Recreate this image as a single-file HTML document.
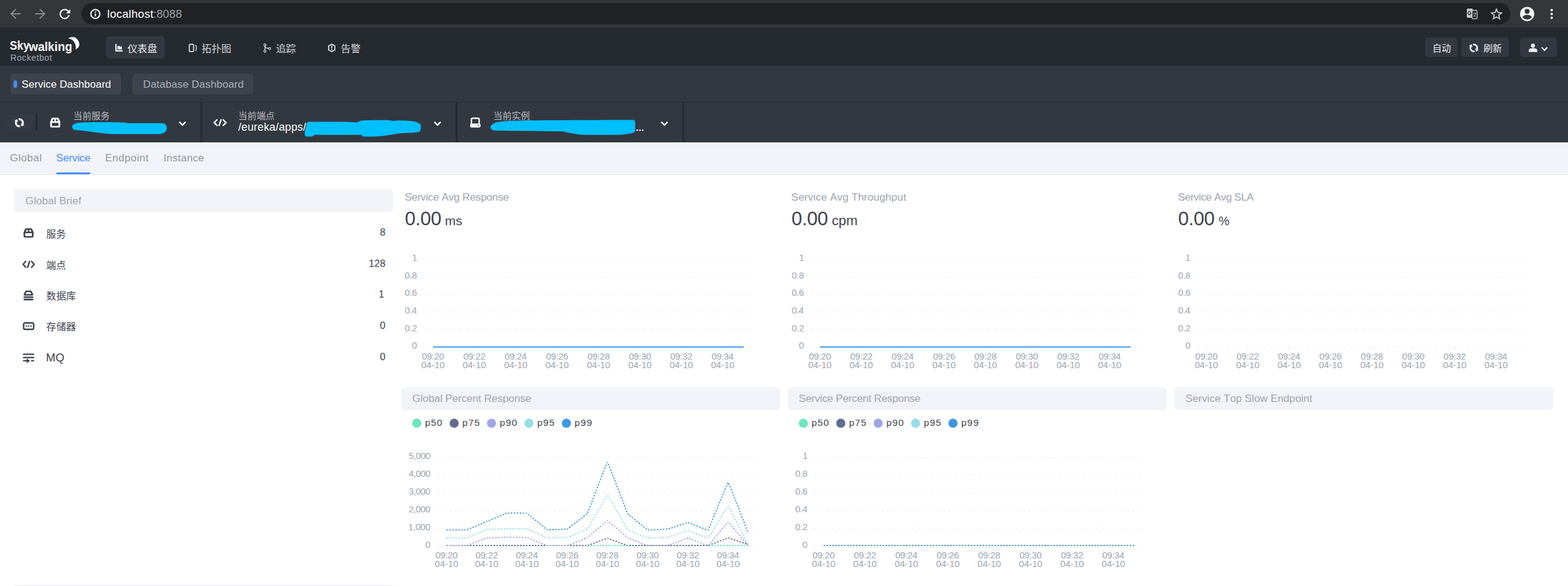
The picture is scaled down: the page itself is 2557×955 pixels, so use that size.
<!DOCTYPE html>
<html lang="zh"><head><meta charset="utf-8"><title>SkyWalking</title>
<style>
html,body{margin:0;padding:0;background:#fff}
body{width:2557px;height:955px;overflow:hidden;position:relative;font-family:"Liberation Sans",sans-serif;font-kerning:none}
#page{position:absolute;left:0;top:0;width:2557px;height:955px;overflow:hidden}
#page>div{position:absolute}
#page>svg{position:absolute;left:0;top:0}
.t{position:absolute;white-space:pre;font-kerning:none;font-variant-ligatures:none}
svg text{font-family:"Liberation Sans","Noto Sans CJK SC",sans-serif}
</style></head><body><div id="page">
<div style="left:0px;top:0px;width:2557px;height:45px;background:#35363a;"></div>
<div style="left:133px;top:5px;width:2329.8px;height:35px;background:#202124;border-radius:17.5px;"></div>
<div style="left:0px;top:45px;width:2557px;height:61.6px;background:#252a2f;"></div>
<div style="left:173px;top:59px;width:96px;height:36px;background:#333840;border-radius:5px;"></div>
<div style="left:2324px;top:61px;width:53px;height:32px;background:#333840;border-radius:5px;"></div>
<div style="left:2383px;top:61px;width:78px;height:32px;background:#333840;border-radius:5px;"></div>
<div style="left:2479px;top:61px;width:60px;height:32px;background:#333840;border-radius:5px;"></div>
<div style="left:0px;top:106.6px;width:2557px;height:59.4px;background:#333840;"></div>
<div style="left:17px;top:120px;width:180px;height:33.5px;background:#3e434c;border-radius:5px;"></div>
<div style="left:22px;top:131px;width:6px;height:12px;background:#448dfe;border-radius:3px;"></div>
<div style="left:216px;top:120px;width:197px;height:33.5px;background:#3e434c;border-radius:5px;"></div>
<div style="left:0px;top:166px;width:2557px;height:66px;background:#333840;"></div>
<div style="left:0px;top:165.6px;width:2557px;height:1.4px;background:#252a2f;"></div>
<div style="left:327.2px;top:167px;width:2.7px;height:65px;background:#252a2f;"></div>
<div style="left:743.4px;top:167px;width:2.7px;height:65px;background:#252a2f;"></div>
<div style="left:1113.3px;top:167px;width:2.7px;height:65px;background:#252a2f;"></div>
<div style="left:58.2px;top:185px;width:2.6px;height:28px;background:#252a2f;"></div>
<div style="left:11.8px;top:187px;width:41px;height:25.4px;background:#353a45;border-radius:4px"></div>
<div style="left:0px;top:232px;width:2557px;height:53px;background:#f3f4f9;"></div>
<div style="left:0px;top:284.2px;width:2557px;height:1px;background:#e6e8ef;"></div>
<div style="left:92px;top:281px;width:55px;height:3.4px;background:#448dfe;"></div>
<div style="left:23px;top:309px;width:618px;height:36px;background:#f3f4f9;border-radius:5px;"></div>
<div style="left:24px;top:953px;width:616px;height:2px;background:#f3f4f9;border-radius:4px 4px 0 0;"></div>
<div style="left:654px;top:631px;width:618px;height:36.6px;background:#f3f4f9;border-radius:5px;"></div>
<div style="left:1284.5px;top:631px;width:618px;height:36.6px;background:#f3f4f9;border-radius:5px;"></div>
<div style="left:1915px;top:631px;width:618px;height:36.6px;background:#f3f4f9;border-radius:5px;"></div>
<svg width="2557" height="955" viewBox="0 0 2557 955">
<g fill="none" stroke="#8b8c90" stroke-width="2"><path d="M33.6 22.6H18.4M26 14.9L18.2 22.6L26 30.3"/><path d="M57.2 22.6H72.4M64.8 14.9L72.6 22.6L64.8 30.3"/></g>
<g><path fill="none" stroke="#f1f3f4" stroke-width="2.1" d="M112.1 19.6A7.3 7.3 0 1 0 112.6 24.6"/><path fill="#f1f3f4" d="M114.6 14.9V21.7H107.8Z"/></g>
<g><circle cx="155.5" cy="22.8" r="7.3" fill="none" stroke="#fff" stroke-width="2"/><rect x="154.5" y="21.9" width="2" height="4.8" fill="#fff"/><rect x="154.5" y="18.6" width="2" height="2" fill="#fff"/></g>
<g><rect x="2392" y="14" width="9.6" height="15" rx="1.2" fill="#c4c7cc"/><rect x="2400.6" y="17" width="8.2" height="13.6" rx="1" fill="#202124" stroke="#c4c7cc" stroke-width="1.3"/><path d="M2398.9 21.4A2.6 2.6 0 1 1 2398.2 19.4M2396.6 21.4H2399" fill="none" stroke="#202124" stroke-width="1.2"/><path d="M2402.6 21.6H2407.4M2405 20.4V21.6M2406.6 21.8C2406 24.4 2404.6 26.2 2402.6 27.6M2403.4 23.6C2404.2 25.4 2405.6 26.8 2407.4 27.8" fill="none" stroke="#c4c7cc" stroke-width="1"/></g>
<path d="M2440.4 15L2442.69 20.44L2448.58 20.94L2444.11 24.81L2445.45 30.56L2440.4 27.5L2435.35 30.56L2436.69 24.81L2432.22 20.94L2438.11 20.44Z" fill="none" stroke="#c4c7cc" stroke-width="1.9" stroke-linejoin="miter"/>
<g><circle cx="2490.4" cy="22.8" r="11.6" fill="#f1f3f4"/><circle cx="2490.4" cy="18.4" r="4" fill="#35363a"/><path d="M2483 28.4C2483 25.4 2487.4 24.2 2490.4 24.2S2497.8 25.4 2497.8 28.4C2496 30.4 2493.4 31.7 2490.4 31.7S2484.8 30.4 2483 28.4Z" fill="#35363a"/></g>
<circle cx="2530.4" cy="16.6" r="2" fill="#f1f3f4"/>
<circle cx="2530.4" cy="22.8" r="2" fill="#f1f3f4"/>
<circle cx="2530.4" cy="29.1" r="2" fill="#f1f3f4"/>
<path fill="#fff" d="M111.2 62.8C114 60.6 117 60 119.3 60.3C123 60.8 125.4 62.8 126.9 65.3C128.6 67.8 129.6 70.4 129.4 72.9C129.2 75.4 127.6 77.6 125.6 79.1C124.6 79.8 123.6 80.2 122.5 80.4C123.6 79.2 123.9 77.8 123.7 76.6C123.4 74.8 123.2 73.2 122.5 71.6C121.6 69.2 120 67 118.1 65.3C116.2 63.8 113.8 63 111.2 62.8Z"/>
<g fill="#efeff1"><path d="M188 71.7H190.2V81.8H200V84H188Z"/><path d="M191.4 80.6V74.4L193 75.6L194.4 74.6L196.4 76.2L198.8 75.2V80.6Z"/></g>
<text x="208" y="84.8" font-size="16.1" fill="#efeff1">仪表盘</text>
<g fill="none" stroke="#d2d4d8" stroke-width="1.9"><rect x="308.7" y="72.3" width="7" height="11.8" rx="1.9"/><path d="M318.6 73.4C321 75.4 321 81 318.6 83" stroke-width="1.6"/></g>
<text x="328.8" y="84.8" font-size="16.1" fill="#d2d4d8">拓扑图</text>
<g fill="none" stroke="#d2d4d8" stroke-width="1.3"><circle cx="432" cy="73.1" r="1.7"/><circle cx="432" cy="83.3" r="1.7"/><circle cx="439.6" cy="79" r="1.7"/><path d="M432 74.8V81.6M432 75.4C432.6 78 434.6 78.8 437.9 79" stroke-width="1.5"/></g>
<text x="450" y="84.9" font-size="16.3" fill="#d2d4d8">追踪</text>
<g><path d="M541 72L546 74.9V81.4L541 84.3L536 81.4V74.9Z" fill="none" stroke="#d2d4d8" stroke-width="1.9" stroke-linejoin="round"/><rect x="540.1" y="74.8" width="1.9" height="4.4" fill="#d2d4d8"/><rect x="540.1" y="80" width="1.9" height="1.7" fill="#d2d4d8"/></g>
<text x="555.8" y="84.9" font-size="16.1" fill="#d2d4d8">告警</text>
<text x="2336" y="84.3" font-size="15" fill="#efeff1">自动</text>
<g><path d="M2401.95 72.69A5.6 5.6 0 0 1 2408.59 80.2" fill="none" stroke="#efeff1" stroke-width="2.5"/><path d="M2411.49 81.37L2405.69 79.03L2407 84.14Z" fill="#efeff1"/><path d="M2404.85 83.51A5.6 5.6 0 0 1 2398.21 76" fill="none" stroke="#efeff1" stroke-width="2.5"/><path d="M2395.31 74.83L2401.11 77.17L2399.8 72.06Z" fill="#efeff1"/></g>
<text x="2419" y="84.3" font-size="15.1" fill="#efeff1">刷新</text>
<g fill="#efeff1"><circle cx="2499.9" cy="74.4" r="3.3"/><path d="M2492.9 84.8V82.4C2492.9 80 2495.4 78.6 2499.9 78.6S2506.9 80 2506.9 82.4V84.8Z"/></g>
<path d="M2514.7 77.8L2518.7 82.1L2522.7 77.8" fill="none" stroke="#efeff1" stroke-width="2.2" stroke-linecap="round" stroke-linejoin="round"/>
<g><path d="M30.41 194.52A5.7 5.7 0 0 1 36.81 202.42" fill="none" stroke="#ffffff" stroke-width="3"/><path d="M39.82 203.76L33.79 201.08L35.18 206.07Z" fill="#ffffff"/><path d="M32.79 205.68A5.7 5.7 0 0 1 26.39 197.78" fill="none" stroke="#ffffff" stroke-width="3"/><path d="M23.38 196.44L29.41 199.12L28.02 194.13Z" fill="#ffffff"/></g>
<path d="M81.8 198.46L83.93 193.31Q84.59 191.7 86.39 191.7L93.61 191.7Q95.41 191.7 96.07 193.31L98.2 198.46Q98.2 199.11 98.2 199.75L98.2 205.55Q98.2 207.8 95.9 207.8L84.1 207.8Q81.8 207.8 81.8 205.55L81.8 199.75Q81.8 199.11 81.8 198.46Z" fill="#ffffff"/>
<path d="M86.72 194.44L88.85 194.44L88.85 197.5L85.41 197.5ZM91.15 194.44L93.28 194.44L94.59 197.5L91.15 197.5ZM84.59 200.23H95.41V205.22H84.59Z" fill="#333840"/>
<text x="119.6" y="194" font-size="14.8" fill="#b9bcc3">当前服务</text>
<path fill="#00bfff" d="M117.6 205.1C120 202 124 200.4 128.4 200C150 198.6 180 199 199 199.5C204 199.8 208 200.8 211.9 200.8H263.5C267 201 269.4 202 270.4 203.4C271.8 205 272.4 207 272.1 209.4C272 212 270.8 214 268.7 215.4C266 217.4 263 218.4 259.2 218.5H186C177 218.2 168 217.4 160.2 216.3C151 215 143 213.8 134.4 212.9C129 212.6 124 212.4 120.6 211.6C118.4 210 117.4 207.6 117.6 205.1Z"/>
<path d="M293.1 199.4L297.5 203.8L301.9 199.4" fill="none" stroke="#ffffff" stroke-width="2.4" stroke-linecap="round" stroke-linejoin="round"/>
<path d="M353.79 195.34L349.23 199.85L353.79 204.37M364.01 195.34L368.57 199.85L364.01 204.37M360.56 195.22L357.24 204.48" fill="none" stroke="#ffffff" stroke-width="2.3" stroke-linecap="round" stroke-linejoin="round"/>
<text x="388.6" y="194" font-size="14.8" fill="#b9bcc3">当前端点</text>
<path fill="#00bfff" d="M501.9 198.4H566.4C572 198.4 577 199.6 581.7 199.4C585 198.6 587 196.8 589.8 196.4C604 195.6 620 195.6 632.5 195.8C636 196 639 197 642.7 196.9C646 196.6 649 196.2 652.8 196.4C658 196.4 663 196.4 668.1 196.9C674 197.4 678.6 198.2 681.3 199.9C684.6 201.4 686.6 203 686.4 205.5C686.6 209 686 212.6 684.4 214.7C676 216.6 664 216.6 652.8 217.2C641 218.6 629 221.4 617.3 222.3C609 222.8 600 222.8 591.8 222.6C590.4 222 590.2 220.6 589.8 219.7H512.5C511 221.4 510 222.4 508.5 222.6H499.3C497.6 221.4 496.8 219.6 496.8 217.7C497 214.6 497.8 212 498.3 209.6C498.8 205.6 499.8 201.4 501.9 198.4Z"/>
<path d="M709 199.4L713.45 203.8L717.9 199.4" fill="none" stroke="#ffffff" stroke-width="2.4" stroke-linecap="round" stroke-linejoin="round"/>
<path d="M768.81 201.58V194.82Q768.81 192.73 771.19 192.73H779.01Q781.39 192.73 781.39 194.82V201.58" fill="none" stroke="#ffffff" stroke-width="2.3"/>
<rect x="766.6" y="201.26" width="17" height="6.44" rx="2" fill="#ffffff"/>
<circle cx="780.2" cy="204.48" r="1.1" fill="#333840"/>
<text x="804.6" y="194" font-size="14.9" fill="#b9bcc3">当前实例</text>
<path fill="#00bfff" d="M799.9 206.1C802 202.6 806 200 810.8 198.9C824 197 838 196.6 851.3 196.4C900 195.8 980 195.6 1033.6 195.4C1035.2 196.2 1035.8 197.4 1035.9 198.9V214C1034 216.4 1030 217.4 1024.9 217.9C1020 219 1015 219.6 1010.5 219.7H952.6C945 219.4 938 218.6 930.9 217C926 216.2 921 214.6 916.4 214C880 213.4 840 213.4 807.9 212.9C804 212.4 801.4 211.4 800.6 209.7C799.8 208.6 799.6 207.2 799.9 206.1Z"/>
<rect x="1038" y="211" width="2.3" height="2.3" fill="#fff"/>
<rect x="1042.4" y="211" width="2.3" height="2.3" fill="#fff"/>
<rect x="1046.9" y="211" width="2.3" height="2.3" fill="#fff"/>
<path d="M1079.1 199.4L1083.5 204L1087.9 199.4" fill="none" stroke="#ffffff" stroke-width="2.4" stroke-linecap="round" stroke-linejoin="round"/>
<path d="M38.4 378.38L40.53 373.52Q41.19 372 42.99 372L50.21 372Q52.01 372 52.67 373.52L54.8 378.38Q54.8 378.99 54.8 379.6L54.8 385.07Q54.8 387.2 52.5 387.2L40.7 387.2Q38.4 387.2 38.4 385.07L38.4 379.6Q38.4 378.99 38.4 378.38Z" fill="#3d444f"/>
<path d="M43.32 374.58L45.45 374.58L45.45 377.47L42.01 377.47ZM47.75 374.58L49.88 374.58L51.19 377.47L47.75 377.47ZM41.19 380.06H52.01V384.77H41.19Z" fill="#ffffff"/>
<text x="75.6" y="386.8" font-size="15.9" fill="#3d444f">服务</text>
<path d="M41.87 425.98L37.69 430.75L41.87 435.52M51.53 425.98L55.71 430.75L51.53 435.52M48.28 425.86L45.12 435.64" fill="none" stroke="#3d444f" stroke-width="2.4" stroke-linecap="round" stroke-linejoin="round"/>
<text x="75.6" y="437.6" font-size="15.9" fill="#3d444f">端点</text>
<g fill="#3d444f"><path d="M38.4 480.12L40.96 474.68Q41.6 473.4 43.2 473.4H49.6Q51.2 473.4 51.84 474.68L54.4 480.12Q54.6 481.72 52.8 481.72H40Q38.2 481.72 38.4 480.12ZM43.36 475.96H49.44L51.2 479.32H41.6Z" fill-rule="evenodd"/><rect x="38.4" y="483" width="16" height="2.56" rx="1.2"/><rect x="38.4" y="486.84" width="16" height="2.56" rx="1.2"/></g>
<text x="75.6" y="487.6" font-size="16.1" fill="#3d444f">数据库</text>
<g><rect x="38.5" y="526.2" width="16.4" height="10.6" rx="2.6" fill="none" stroke="#3d444f" stroke-width="2.4"/><circle cx="42.8" cy="531.5" r="1.25" fill="#3d444f"/><circle cx="46.7" cy="531.5" r="1.25" fill="#3d444f"/><circle cx="50.6" cy="531.5" r="1.25" fill="#3d444f"/></g>
<text x="75.6" y="538.4" font-size="16.1" fill="#3d444f">存储器</text>
<g fill="none" stroke="#3d444f" stroke-width="2.2" stroke-linecap="round"><path d="M38.4 577.4H54.9M38.4 582.7H54.9M38.4 588H43.4M51.4 588H54.9"/><path d="M44.2 585.2L48 588L44.2 590.8Z" fill="#3d444f" stroke-width="1.2" stroke-linejoin="round"/><path d="M42 588H45" stroke-width="2.2"/></g>
<path d="M689.2 422.1H1229.4M689.2 450.82H1229.4M689.2 479.54H1229.4M689.2 508.26H1229.4M689.2 536.98H1229.4M689.2 565.7H1229.4" fill="none" stroke="#eeeff3" stroke-width="1" stroke-dasharray="5 5"/>
<path d="M706.1 565.7V570.7M773.6 565.7V570.7M841.1 565.7V570.7M908.6 565.7V570.7M976.1 565.7V570.7M1043.6 565.7V570.7M1111.1 565.7V570.7M1178.6 565.7V570.7" fill="none" stroke="#e9ebee" stroke-width="1"/>
<path d="M706.1 565.5H1212.6" fill="none" stroke="#3f96e3" stroke-width="2.2"/>
<path d="M1320.2 422.1H1860.4M1320.2 450.82H1860.4M1320.2 479.54H1860.4M1320.2 508.26H1860.4M1320.2 536.98H1860.4M1320.2 565.7H1860.4" fill="none" stroke="#eeeff3" stroke-width="1" stroke-dasharray="5 5"/>
<path d="M1337.1 565.7V570.7M1404.6 565.7V570.7M1472.1 565.7V570.7M1539.6 565.7V570.7M1607.1 565.7V570.7M1674.6 565.7V570.7M1742.1 565.7V570.7M1809.6 565.7V570.7" fill="none" stroke="#e9ebee" stroke-width="1"/>
<path d="M1337.1 565.5H1843.6" fill="none" stroke="#3f96e3" stroke-width="2.2"/>
<path d="M1950.4 422.1H2490.6M1950.4 450.82H2490.6M1950.4 479.54H2490.6M1950.4 508.26H2490.6M1950.4 536.98H2490.6M1950.4 565.7H2490.6" fill="none" stroke="#eeeff3" stroke-width="1" stroke-dasharray="5 5"/>
<path d="M1967.3 565.7V570.7M2034.8 565.7V570.7M2102.3 565.7V570.7M2169.8 565.7V570.7M2237.3 565.7V570.7M2304.8 565.7V570.7M2372.3 565.7V570.7M2439.8 565.7V570.7" fill="none" stroke="#e9ebee" stroke-width="1"/>
<circle cx="679.6" cy="689.7" r="7.4" fill="#6be6c1"/>
<circle cx="740.6" cy="689.7" r="7.4" fill="#626c91"/>
<circle cx="801.6" cy="689.7" r="7.4" fill="#a0a7e6"/>
<circle cx="862.6" cy="689.7" r="7.4" fill="#96dee8"/>
<circle cx="923.6" cy="689.7" r="7.4" fill="#3f96e3"/>
<circle cx="1310.1" cy="689.7" r="7.4" fill="#6be6c1"/>
<circle cx="1371.1" cy="689.7" r="7.4" fill="#626c91"/>
<circle cx="1432.1" cy="689.7" r="7.4" fill="#a0a7e6"/>
<circle cx="1493.1" cy="689.7" r="7.4" fill="#96dee8"/>
<circle cx="1554.1" cy="689.7" r="7.4" fill="#3f96e3"/>
<path d="M712 745.5H1237.6M712 774.35H1237.6M712 803.2H1237.6M712 832.05H1237.6M712 860.9H1237.6M712 889.75H1237.6" fill="none" stroke="#eeeff3" stroke-width="1" stroke-dasharray="5 5"/>
<path d="M728.2 889.75V894.75M793.8 889.75V894.75M859.4 889.75V894.75M925 889.75V894.75M990.6 889.75V894.75M1056.2 889.75V894.75M1121.8 889.75V894.75M1187.4 889.75V894.75" fill="none" stroke="#e9ebee" stroke-width="1"/>
<path d="M1326.2 745.5H1866.2M1326.2 774.35H1866.2M1326.2 803.2H1866.2M1326.2 832.05H1866.2M1326.2 860.9H1866.2M1326.2 889.75H1866.2" fill="none" stroke="#eeeff3" stroke-width="1" stroke-dasharray="5 5"/>
<path d="M1343.2 889.75V894.75M1410.7 889.75V894.75M1478.2 889.75V894.75M1545.7 889.75V894.75M1613.2 889.75V894.75M1680.7 889.75V894.75M1748.2 889.75V894.75M1815.7 889.75V894.75" fill="none" stroke="#e9ebee" stroke-width="1"/>
<path d="M728.2 889C728.2 889 759.69 889 761 889C762.31 889 792.49 889 793.8 889C795.11 889 825.29 889 826.6 889C827.91 889 858.09 889 859.4 889C860.71 889 890.89 889 892.2 889C893.51 889 923.69 889 925 889C926.31 889 956.49 889 957.8 889C959.11 889 989.29 889 990.6 889C991.91 889 1022.09 889 1023.4 889C1024.71 889 1054.89 889 1056.2 889C1057.51 889 1087.69 889 1089 889C1090.31 889 1120.49 889 1121.8 889C1123.11 889 1153.29 889 1154.6 889C1155.91 889 1186.09 889 1187.4 889C1188.71 889 1220.2 889 1220.2 889" fill="none" stroke="#6be6c1" stroke-width="1.85" stroke-dasharray="2.4 2.4" stroke-linejoin="round"/>
<path d="M728.2 889C728.2 889 759.69 889 761 889C762.31 889 792.49 889 793.8 889C795.11 889 825.29 889 826.6 889C827.91 889 858.09 889 859.4 889C860.71 889 890.89 889 892.2 889C893.51 889 923.69 889 925 889C926.31 889 956.53 889 957.8 889C959.15 888.76 989.29 877.3 990.6 877.3C991.91 877.3 1022.05 888.76 1023.4 889C1024.67 889 1054.89 889 1056.2 889C1057.51 889 1087.69 889 1089 889C1090.31 889 1120.49 889 1121.8 889C1123.11 889 1153.33 889 1154.6 889C1155.96 888.75 1186.08 876.73 1187.4 876.7C1188.7 876.7 1220.2 887.4 1220.2 887.4" fill="none" stroke="#626c91" stroke-width="1.85" stroke-dasharray="2.4 2.4" stroke-linejoin="round"/>
<path d="M728.2 889C728.2 889 759.73 889 761 889C762.36 888.75 792.45 876.98 793.8 876.7C795.07 876.44 825.29 875.41 826.6 875.4C827.91 875.39 858.13 876.04 859.4 876.3C860.76 876.58 890.84 888.74 892.2 889C893.47 889 923.73 889 925 889C926.36 888.74 956.62 877.03 957.8 876.3C959.24 875.42 989.29 848.8 990.6 848.8C991.91 848.8 1021.96 875.42 1023.4 876.3C1024.58 877.03 1054.84 888.74 1056.2 889C1057.47 889 1087.73 889 1089 889C1090.35 888.75 1120.49 877 1121.8 877C1123.11 877 1153.52 889 1154.6 889C1156.15 888.39 1186.09 851.1 1187.4 851.1C1188.71 851.1 1220.2 889 1220.2 889" fill="none" stroke="#a0a7e6" stroke-width="1.85" stroke-dasharray="2.4 2.4" stroke-linejoin="round"/>
<path d="M728.2 876.7C728.2 876.7 759.74 876.96 761 876.7C762.36 876.41 792.44 863.31 793.8 863C795.06 862.72 825.29 862.02 826.6 862C827.91 861.98 858.15 861.73 859.4 862C860.77 862.3 890.83 876.01 892.2 876.3C893.46 876.56 923.74 876.07 925 875.8C926.37 875.5 956.86 862.98 957.8 862C959.49 860.23 989.3 807 990.6 807C991.92 807.02 1021.7 861.2 1023.4 863C1024.33 863.99 1054.84 876.43 1056.2 876.7C1057.46 876.95 1087.73 876.04 1089 875.8C1090.35 875.54 1120.49 864.18 1121.8 864.2C1123.12 864.22 1153.65 877.27 1154.6 876.7C1156.27 875.7 1186.19 824.57 1187.4 824.8C1188.82 825.07 1220.2 889 1220.2 889" fill="none" stroke="#96dee8" stroke-width="1.85" stroke-dasharray="2.4 2.4" stroke-linejoin="round"/>
<path d="M728.2 863.5C728.2 863.5 759.74 863.76 761 863.5C762.36 863.22 792.49 850.45 793.8 849.9C795.11 849.35 825.24 836.48 826.6 836.2C827.86 835.94 858.25 836.13 859.4 836.6C860.88 837.21 890.72 862.62 892.2 863.2C893.35 863.65 923.84 862.67 925 862.2C926.47 861.61 956.97 838.08 957.8 836.7C959.59 833.73 989.29 753.5 990.6 753.5C991.91 753.5 1021.62 833.71 1023.4 836.7C1024.24 838.11 1054.72 862.93 1056.2 863.5C1057.35 863.95 1087.72 862.43 1089 862.2C1090.34 861.96 1120.5 851.57 1121.8 851.6C1123.12 851.63 1153.83 864.47 1154.6 863.7C1156.45 861.86 1186.12 786.4 1187.4 786.5C1188.75 786.61 1220.2 868.9 1220.2 868.9" fill="none" stroke="#3f96e3" stroke-width="1.85" stroke-dasharray="2.4 2.4" stroke-linejoin="round"/>
<path d="M1343.2 889H1849.8" fill="none" stroke="#3f96e3" stroke-width="1.85" stroke-dasharray="2.4 2.4"/>
</svg>
<span class="t" style="left:16.2px;top:63px;font-size:20.6px;line-height:22px;color:#fff;font-weight:bold;transform-origin:0 0;transform:scaleX(.872)">Sky</span>
<span class="t" style="left:47.2px;top:66.4px;font-size:19.6px;line-height:20px;color:#fff;font-weight:bold;transform-origin:0 0;transform:scaleX(.985)">walking</span>
<span class="t" style="left:174.75px;top:11px;font-size:18.6px;line-height:23px;color:#ffffff;letter-spacing:0.25px;">localhost</span>
<span class="t" style="left:249.9px;top:11px;font-size:18.6px;line-height:23px;color:#9aa0a6;letter-spacing:0.09px;">:8088</span>
<span class="t" style="left:16.64px;top:85px;font-size:14.2px;line-height:19px;color:#a3abb8;letter-spacing:0.52px;">Rocketbot</span>
<span class="t" style="left:35.23px;top:127px;font-size:17px;line-height:21px;color:#ffffff;letter-spacing:0.08px;">Service Dashboard</span>
<span class="t" style="left:233.21px;top:127px;font-size:17px;line-height:21px;color:#aab0ba;letter-spacing:0.21px;">Database Dashboard</span>
<span class="t" style="left:388.4px;top:196px;font-size:17.8px;line-height:22px;color:#ffffff;letter-spacing:0.25px;">/eureka/apps/</span>
<span class="t" style="left:16.35px;top:247px;font-size:17px;line-height:21px;color:#8f96a3;letter-spacing:0.49px;">Global</span>
<span class="t" style="left:91.83px;top:247px;font-size:17px;line-height:21px;color:#448dfe;letter-spacing:-0.16px;">Service</span>
<span class="t" style="left:171.41px;top:247px;font-size:17px;line-height:21px;color:#8f96a3;letter-spacing:0.52px;">Endpoint</span>
<span class="t" style="left:266.63px;top:247px;font-size:17px;line-height:21px;color:#8f96a3;letter-spacing:0.27px;">Instance</span>
<span class="t" style="left:41.43px;top:316px;font-size:17.3px;line-height:22px;color:#9da5b2;letter-spacing:0.07px;">Global Brief</span>
<span class="t" style="left:74.98px;top:571px;font-size:18.57px;line-height:23px;color:#3d444f;">MQ</span>
<span class="t" style="left:619.59px;top:368px;font-size:16.2px;line-height:21px;color:#3d444f;">8</span>
<span class="t" style="left:601.58px;top:419px;font-size:16.2px;line-height:21px;color:#3d444f;">128</span>
<span class="t" style="left:617.58px;top:469px;font-size:16.2px;line-height:21px;color:#3d444f;">1</span>
<span class="t" style="left:619.52px;top:520px;font-size:16.2px;line-height:21px;color:#3d444f;">0</span>
<span class="t" style="left:619.52px;top:571px;font-size:16.2px;line-height:21px;color:#3d444f;">0</span>
<span class="t" style="left:659.91px;top:310px;font-size:17.3px;line-height:22px;color:#9da5b2;letter-spacing:-0.25px;">Service Avg Response</span>
<span class="t" style="left:660.18px;top:339px;font-size:31.25px;line-height:36px;color:#3d444f;letter-spacing:-0.33px;">0.00</span>
<span class="t" style="left:725.6px;top:347px;font-size:21.13px;line-height:26px;color:#3d444f;">ms</span>
<span class="t" style="left:671.89px;top:410px;font-size:15px;line-height:19px;color:#9da5b2;">1</span>
<span class="t" style="left:660.01px;top:439px;font-size:15px;line-height:19px;color:#9da5b2;letter-spacing:-0.36px;">0.8</span>
<span class="t" style="left:660.01px;top:467px;font-size:15px;line-height:19px;color:#9da5b2;letter-spacing:-0.35px;">0.6</span>
<span class="t" style="left:660.01px;top:496px;font-size:15px;line-height:19px;color:#9da5b2;letter-spacing:-0.46px;">0.4</span>
<span class="t" style="left:660.01px;top:525px;font-size:15px;line-height:19px;color:#9da5b2;letter-spacing:-0.31px;">0.2</span>
<span class="t" style="left:671.74px;top:553px;font-size:15px;line-height:19px;color:#9da5b2;">0</span>
<span class="t" style="left:687.91px;top:571px;font-size:15px;line-height:19px;color:#9da5b2;letter-spacing:-0.29px;">09:20</span>
<span class="t" style="left:687.01px;top:585px;font-size:15px;line-height:19px;color:#9da5b2;letter-spacing:-0.05px;">04-10</span>
<span class="t" style="left:755.41px;top:571px;font-size:15px;line-height:19px;color:#9da5b2;letter-spacing:-0.25px;">09:22</span>
<span class="t" style="left:754.51px;top:585px;font-size:15px;line-height:19px;color:#9da5b2;letter-spacing:-0.05px;">04-10</span>
<span class="t" style="left:822.91px;top:571px;font-size:15px;line-height:19px;color:#9da5b2;letter-spacing:-0.33px;">09:24</span>
<span class="t" style="left:822.01px;top:585px;font-size:15px;line-height:19px;color:#9da5b2;letter-spacing:-0.05px;">04-10</span>
<span class="t" style="left:890.41px;top:571px;font-size:15px;line-height:19px;color:#9da5b2;letter-spacing:-0.27px;">09:26</span>
<span class="t" style="left:889.51px;top:585px;font-size:15px;line-height:19px;color:#9da5b2;letter-spacing:-0.05px;">04-10</span>
<span class="t" style="left:957.91px;top:571px;font-size:15px;line-height:19px;color:#9da5b2;letter-spacing:-0.27px;">09:28</span>
<span class="t" style="left:957.01px;top:585px;font-size:15px;line-height:19px;color:#9da5b2;letter-spacing:-0.05px;">04-10</span>
<span class="t" style="left:1025.41px;top:571px;font-size:15px;line-height:19px;color:#9da5b2;letter-spacing:-0.29px;">09:30</span>
<span class="t" style="left:1024.51px;top:585px;font-size:15px;line-height:19px;color:#9da5b2;letter-spacing:-0.05px;">04-10</span>
<span class="t" style="left:1092.91px;top:571px;font-size:15px;line-height:19px;color:#9da5b2;letter-spacing:-0.25px;">09:32</span>
<span class="t" style="left:1092.01px;top:585px;font-size:15px;line-height:19px;color:#9da5b2;letter-spacing:-0.05px;">04-10</span>
<span class="t" style="left:1160.41px;top:571px;font-size:15px;line-height:19px;color:#9da5b2;letter-spacing:-0.33px;">09:34</span>
<span class="t" style="left:1159.51px;top:585px;font-size:15px;line-height:19px;color:#9da5b2;letter-spacing:-0.05px;">04-10</span>
<span class="t" style="left:1290.31px;top:310px;font-size:17.3px;line-height:22px;color:#9da5b2;letter-spacing:0.1px;">Service Avg Throughput</span>
<span class="t" style="left:1290.68px;top:339px;font-size:31.25px;line-height:36px;color:#3d444f;letter-spacing:-0.33px;">0.00</span>
<span class="t" style="left:1356.46px;top:346px;font-size:22.24px;line-height:27px;color:#3d444f;">cpm</span>
<span class="t" style="left:1302.89px;top:410px;font-size:15px;line-height:19px;color:#9da5b2;">1</span>
<span class="t" style="left:1291.01px;top:439px;font-size:15px;line-height:19px;color:#9da5b2;letter-spacing:-0.36px;">0.8</span>
<span class="t" style="left:1291.01px;top:467px;font-size:15px;line-height:19px;color:#9da5b2;letter-spacing:-0.35px;">0.6</span>
<span class="t" style="left:1291.01px;top:496px;font-size:15px;line-height:19px;color:#9da5b2;letter-spacing:-0.46px;">0.4</span>
<span class="t" style="left:1291.01px;top:525px;font-size:15px;line-height:19px;color:#9da5b2;letter-spacing:-0.31px;">0.2</span>
<span class="t" style="left:1302.74px;top:553px;font-size:15px;line-height:19px;color:#9da5b2;">0</span>
<span class="t" style="left:1318.91px;top:571px;font-size:15px;line-height:19px;color:#9da5b2;letter-spacing:-0.29px;">09:20</span>
<span class="t" style="left:1318.01px;top:585px;font-size:15px;line-height:19px;color:#9da5b2;letter-spacing:-0.05px;">04-10</span>
<span class="t" style="left:1386.41px;top:571px;font-size:15px;line-height:19px;color:#9da5b2;letter-spacing:-0.25px;">09:22</span>
<span class="t" style="left:1385.51px;top:585px;font-size:15px;line-height:19px;color:#9da5b2;letter-spacing:-0.05px;">04-10</span>
<span class="t" style="left:1453.91px;top:571px;font-size:15px;line-height:19px;color:#9da5b2;letter-spacing:-0.33px;">09:24</span>
<span class="t" style="left:1453.01px;top:585px;font-size:15px;line-height:19px;color:#9da5b2;letter-spacing:-0.05px;">04-10</span>
<span class="t" style="left:1521.41px;top:571px;font-size:15px;line-height:19px;color:#9da5b2;letter-spacing:-0.27px;">09:26</span>
<span class="t" style="left:1520.51px;top:585px;font-size:15px;line-height:19px;color:#9da5b2;letter-spacing:-0.05px;">04-10</span>
<span class="t" style="left:1588.91px;top:571px;font-size:15px;line-height:19px;color:#9da5b2;letter-spacing:-0.27px;">09:28</span>
<span class="t" style="left:1588.01px;top:585px;font-size:15px;line-height:19px;color:#9da5b2;letter-spacing:-0.05px;">04-10</span>
<span class="t" style="left:1656.41px;top:571px;font-size:15px;line-height:19px;color:#9da5b2;letter-spacing:-0.29px;">09:30</span>
<span class="t" style="left:1655.51px;top:585px;font-size:15px;line-height:19px;color:#9da5b2;letter-spacing:-0.05px;">04-10</span>
<span class="t" style="left:1723.91px;top:571px;font-size:15px;line-height:19px;color:#9da5b2;letter-spacing:-0.25px;">09:32</span>
<span class="t" style="left:1723.01px;top:585px;font-size:15px;line-height:19px;color:#9da5b2;letter-spacing:-0.05px;">04-10</span>
<span class="t" style="left:1791.41px;top:571px;font-size:15px;line-height:19px;color:#9da5b2;letter-spacing:-0.33px;">09:34</span>
<span class="t" style="left:1790.51px;top:585px;font-size:15px;line-height:19px;color:#9da5b2;letter-spacing:-0.05px;">04-10</span>
<span class="t" style="left:1921.01px;top:310px;font-size:17.3px;line-height:22px;color:#9da5b2;letter-spacing:-0.43px;">Service Avg SLA</span>
<span class="t" style="left:1921.18px;top:339px;font-size:31.25px;line-height:36px;color:#3d444f;letter-spacing:-0.33px;">0.00</span>
<span class="t" style="left:1987.29px;top:348px;font-size:19.81px;line-height:24px;color:#3d444f;">%</span>
<span class="t" style="left:1933.09px;top:410px;font-size:15px;line-height:19px;color:#9da5b2;">1</span>
<span class="t" style="left:1921.21px;top:439px;font-size:15px;line-height:19px;color:#9da5b2;letter-spacing:-0.36px;">0.8</span>
<span class="t" style="left:1921.21px;top:467px;font-size:15px;line-height:19px;color:#9da5b2;letter-spacing:-0.35px;">0.6</span>
<span class="t" style="left:1921.21px;top:496px;font-size:15px;line-height:19px;color:#9da5b2;letter-spacing:-0.46px;">0.4</span>
<span class="t" style="left:1921.21px;top:525px;font-size:15px;line-height:19px;color:#9da5b2;letter-spacing:-0.31px;">0.2</span>
<span class="t" style="left:1932.94px;top:553px;font-size:15px;line-height:19px;color:#9da5b2;">0</span>
<span class="t" style="left:1949.11px;top:571px;font-size:15px;line-height:19px;color:#9da5b2;letter-spacing:-0.29px;">09:20</span>
<span class="t" style="left:1948.21px;top:585px;font-size:15px;line-height:19px;color:#9da5b2;letter-spacing:-0.05px;">04-10</span>
<span class="t" style="left:2016.61px;top:571px;font-size:15px;line-height:19px;color:#9da5b2;letter-spacing:-0.25px;">09:22</span>
<span class="t" style="left:2015.71px;top:585px;font-size:15px;line-height:19px;color:#9da5b2;letter-spacing:-0.05px;">04-10</span>
<span class="t" style="left:2084.11px;top:571px;font-size:15px;line-height:19px;color:#9da5b2;letter-spacing:-0.33px;">09:24</span>
<span class="t" style="left:2083.21px;top:585px;font-size:15px;line-height:19px;color:#9da5b2;letter-spacing:-0.05px;">04-10</span>
<span class="t" style="left:2151.61px;top:571px;font-size:15px;line-height:19px;color:#9da5b2;letter-spacing:-0.27px;">09:26</span>
<span class="t" style="left:2150.71px;top:585px;font-size:15px;line-height:19px;color:#9da5b2;letter-spacing:-0.05px;">04-10</span>
<span class="t" style="left:2219.11px;top:571px;font-size:15px;line-height:19px;color:#9da5b2;letter-spacing:-0.27px;">09:28</span>
<span class="t" style="left:2218.21px;top:585px;font-size:15px;line-height:19px;color:#9da5b2;letter-spacing:-0.05px;">04-10</span>
<span class="t" style="left:2286.61px;top:571px;font-size:15px;line-height:19px;color:#9da5b2;letter-spacing:-0.29px;">09:30</span>
<span class="t" style="left:2285.71px;top:585px;font-size:15px;line-height:19px;color:#9da5b2;letter-spacing:-0.05px;">04-10</span>
<span class="t" style="left:2354.11px;top:571px;font-size:15px;line-height:19px;color:#9da5b2;letter-spacing:-0.25px;">09:32</span>
<span class="t" style="left:2353.21px;top:585px;font-size:15px;line-height:19px;color:#9da5b2;letter-spacing:-0.05px;">04-10</span>
<span class="t" style="left:2421.61px;top:571px;font-size:15px;line-height:19px;color:#9da5b2;letter-spacing:-0.33px;">09:34</span>
<span class="t" style="left:2420.71px;top:585px;font-size:15px;line-height:19px;color:#9da5b2;letter-spacing:-0.05px;">04-10</span>
<span class="t" style="left:672.13px;top:638px;font-size:17.3px;line-height:22px;color:#9da5b2;letter-spacing:-0.12px;">Global Percent Response</span>
<span class="t" style="left:1302.61px;top:638px;font-size:17.3px;line-height:22px;color:#9da5b2;letter-spacing:-0.26px;">Service Percent Response</span>
<span class="t" style="left:1933.21px;top:638px;font-size:17.3px;line-height:22px;color:#9da5b2;letter-spacing:-0.03px;">Service Top Slow Endpoint</span>
<span class="t" style="left:693px;top:679px;font-size:15.5px;line-height:20px;color:#3d444f;letter-spacing:1.17px;">p50</span>
<span class="t" style="left:754px;top:679px;font-size:15.5px;line-height:20px;color:#3d444f;letter-spacing:1.19px;">p75</span>
<span class="t" style="left:815px;top:679px;font-size:15.5px;line-height:20px;color:#3d444f;letter-spacing:1.17px;">p90</span>
<span class="t" style="left:876px;top:679px;font-size:15.5px;line-height:20px;color:#3d444f;letter-spacing:1.19px;">p95</span>
<span class="t" style="left:937px;top:679px;font-size:15.5px;line-height:20px;color:#3d444f;letter-spacing:1.24px;">p99</span>
<span class="t" style="left:1323.5px;top:679px;font-size:15.5px;line-height:20px;color:#3d444f;letter-spacing:1.17px;">p50</span>
<span class="t" style="left:1384.5px;top:679px;font-size:15.5px;line-height:20px;color:#3d444f;letter-spacing:1.19px;">p75</span>
<span class="t" style="left:1445.5px;top:679px;font-size:15.5px;line-height:20px;color:#3d444f;letter-spacing:1.17px;">p90</span>
<span class="t" style="left:1506.5px;top:679px;font-size:15.5px;line-height:20px;color:#3d444f;letter-spacing:1.19px;">p95</span>
<span class="t" style="left:1567.5px;top:679px;font-size:15.5px;line-height:20px;color:#3d444f;letter-spacing:1.24px;">p99</span>
<span class="t" style="left:666.4px;top:733px;font-size:15px;line-height:19px;color:#9da5b2;letter-spacing:-0.51px;">5,000</span>
<span class="t" style="left:666.66px;top:762px;font-size:15px;line-height:19px;color:#9da5b2;letter-spacing:-0.58px;">4,000</span>
<span class="t" style="left:666.43px;top:791px;font-size:15px;line-height:19px;color:#9da5b2;letter-spacing:-0.52px;">3,000</span>
<span class="t" style="left:666.25px;top:820px;font-size:15px;line-height:19px;color:#9da5b2;letter-spacing:-0.47px;">2,000</span>
<span class="t" style="left:665.86px;top:849px;font-size:15px;line-height:19px;color:#9da5b2;letter-spacing:-0.38px;">1,000</span>
<span class="t" style="left:693.54px;top:878px;font-size:15px;line-height:19px;color:#9da5b2;">0</span>
<span class="t" style="left:710.01px;top:895px;font-size:15px;line-height:19px;color:#9da5b2;letter-spacing:-0.29px;">09:20</span>
<span class="t" style="left:709.11px;top:909px;font-size:15px;line-height:19px;color:#9da5b2;letter-spacing:-0.05px;">04-10</span>
<span class="t" style="left:775.61px;top:895px;font-size:15px;line-height:19px;color:#9da5b2;letter-spacing:-0.25px;">09:22</span>
<span class="t" style="left:774.71px;top:909px;font-size:15px;line-height:19px;color:#9da5b2;letter-spacing:-0.05px;">04-10</span>
<span class="t" style="left:841.21px;top:895px;font-size:15px;line-height:19px;color:#9da5b2;letter-spacing:-0.33px;">09:24</span>
<span class="t" style="left:840.31px;top:909px;font-size:15px;line-height:19px;color:#9da5b2;letter-spacing:-0.05px;">04-10</span>
<span class="t" style="left:906.81px;top:895px;font-size:15px;line-height:19px;color:#9da5b2;letter-spacing:-0.27px;">09:26</span>
<span class="t" style="left:905.91px;top:909px;font-size:15px;line-height:19px;color:#9da5b2;letter-spacing:-0.05px;">04-10</span>
<span class="t" style="left:972.41px;top:895px;font-size:15px;line-height:19px;color:#9da5b2;letter-spacing:-0.27px;">09:28</span>
<span class="t" style="left:971.51px;top:909px;font-size:15px;line-height:19px;color:#9da5b2;letter-spacing:-0.05px;">04-10</span>
<span class="t" style="left:1038.01px;top:895px;font-size:15px;line-height:19px;color:#9da5b2;letter-spacing:-0.29px;">09:30</span>
<span class="t" style="left:1037.11px;top:909px;font-size:15px;line-height:19px;color:#9da5b2;letter-spacing:-0.05px;">04-10</span>
<span class="t" style="left:1103.61px;top:895px;font-size:15px;line-height:19px;color:#9da5b2;letter-spacing:-0.25px;">09:32</span>
<span class="t" style="left:1102.71px;top:909px;font-size:15px;line-height:19px;color:#9da5b2;letter-spacing:-0.05px;">04-10</span>
<span class="t" style="left:1169.21px;top:895px;font-size:15px;line-height:19px;color:#9da5b2;letter-spacing:-0.33px;">09:34</span>
<span class="t" style="left:1168.31px;top:909px;font-size:15px;line-height:19px;color:#9da5b2;letter-spacing:-0.05px;">04-10</span>
<span class="t" style="left:1308.69px;top:733px;font-size:15px;line-height:19px;color:#9da5b2;">1</span>
<span class="t" style="left:1296.81px;top:762px;font-size:15px;line-height:19px;color:#9da5b2;letter-spacing:-0.36px;">0.8</span>
<span class="t" style="left:1296.81px;top:791px;font-size:15px;line-height:19px;color:#9da5b2;letter-spacing:-0.35px;">0.6</span>
<span class="t" style="left:1296.81px;top:820px;font-size:15px;line-height:19px;color:#9da5b2;letter-spacing:-0.46px;">0.4</span>
<span class="t" style="left:1296.81px;top:849px;font-size:15px;line-height:19px;color:#9da5b2;letter-spacing:-0.31px;">0.2</span>
<span class="t" style="left:1308.54px;top:878px;font-size:15px;line-height:19px;color:#9da5b2;">0</span>
<span class="t" style="left:1325.01px;top:895px;font-size:15px;line-height:19px;color:#9da5b2;letter-spacing:-0.29px;">09:20</span>
<span class="t" style="left:1324.11px;top:909px;font-size:15px;line-height:19px;color:#9da5b2;letter-spacing:-0.05px;">04-10</span>
<span class="t" style="left:1392.51px;top:895px;font-size:15px;line-height:19px;color:#9da5b2;letter-spacing:-0.25px;">09:22</span>
<span class="t" style="left:1391.61px;top:909px;font-size:15px;line-height:19px;color:#9da5b2;letter-spacing:-0.05px;">04-10</span>
<span class="t" style="left:1460.01px;top:895px;font-size:15px;line-height:19px;color:#9da5b2;letter-spacing:-0.33px;">09:24</span>
<span class="t" style="left:1459.11px;top:909px;font-size:15px;line-height:19px;color:#9da5b2;letter-spacing:-0.05px;">04-10</span>
<span class="t" style="left:1527.51px;top:895px;font-size:15px;line-height:19px;color:#9da5b2;letter-spacing:-0.27px;">09:26</span>
<span class="t" style="left:1526.61px;top:909px;font-size:15px;line-height:19px;color:#9da5b2;letter-spacing:-0.05px;">04-10</span>
<span class="t" style="left:1595.01px;top:895px;font-size:15px;line-height:19px;color:#9da5b2;letter-spacing:-0.27px;">09:28</span>
<span class="t" style="left:1594.11px;top:909px;font-size:15px;line-height:19px;color:#9da5b2;letter-spacing:-0.05px;">04-10</span>
<span class="t" style="left:1662.51px;top:895px;font-size:15px;line-height:19px;color:#9da5b2;letter-spacing:-0.29px;">09:30</span>
<span class="t" style="left:1661.61px;top:909px;font-size:15px;line-height:19px;color:#9da5b2;letter-spacing:-0.05px;">04-10</span>
<span class="t" style="left:1730.01px;top:895px;font-size:15px;line-height:19px;color:#9da5b2;letter-spacing:-0.25px;">09:32</span>
<span class="t" style="left:1729.11px;top:909px;font-size:15px;line-height:19px;color:#9da5b2;letter-spacing:-0.05px;">04-10</span>
<span class="t" style="left:1797.51px;top:895px;font-size:15px;line-height:19px;color:#9da5b2;letter-spacing:-0.33px;">09:34</span>
<span class="t" style="left:1796.61px;top:909px;font-size:15px;line-height:19px;color:#9da5b2;letter-spacing:-0.05px;">04-10</span>
</div></body></html>
